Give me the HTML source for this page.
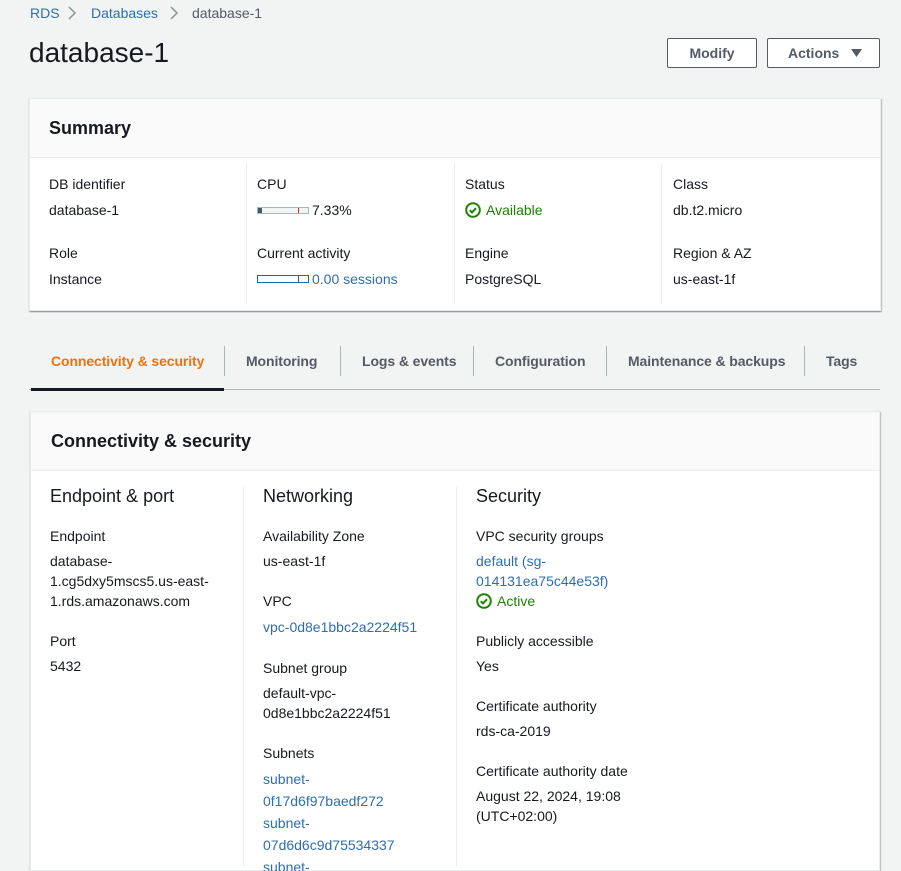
<!DOCTYPE html>
<html><head><meta charset="utf-8"><style>
*{margin:0;padding:0;box-sizing:border-box}
html,body{width:901px;height:871px;overflow:hidden}
body{background:#f2f3f3;font-family:"Liberation Sans",sans-serif;font-size:14px;color:#16191f;position:relative}
.a{position:absolute;white-space:nowrap;line-height:20px}
.l{color:#2e6eb0}
.g{color:#1d8102}
.card{position:absolute;background:#fff;border:1px solid #eaeded;box-shadow:0 1px 1px 0 rgba(0,28,36,.35),1px 1px 1px 0 rgba(0,28,36,.2)}
.hd{position:absolute;left:0;right:0;top:0;background:#fafafa;border-bottom:1px solid #eaeded}
.vd{position:absolute;width:1px;background:#eaeded}
.btn{position:absolute;top:38px;height:30px;border:1px solid #545b64;border-radius:2px;background:#fff;font-weight:bold;color:#545b64;font-size:14px;line-height:28px;text-align:center}
.tab{position:absolute;top:351px;font-weight:bold;color:#545b64;line-height:20px;white-space:nowrap;letter-spacing:-0.1px}
.ts{position:absolute;top:346px;height:30px;width:1px;background:#aab7b8}
</style></head><body>
<div class="a l" style="left:30px;top:3px">RDS</div>
<svg class="a" style="left:67px;top:6px" width="10" height="14"><path d="M2 1l6 6-6 6" fill="none" stroke="#879596" stroke-width="1.5"/></svg>
<div class="a l" style="left:91px;top:3px">Databases</div>
<svg class="a" style="left:169px;top:6px" width="10" height="14"><path d="M2 1l6 6-6 6" fill="none" stroke="#879596" stroke-width="1.5"/></svg>
<div class="a" style="left:192px;top:3px;color:#545b64">database-1</div>
<div class="a" style="left:29px;top:36px;font-size:28px;line-height:34px">database-1</div>
<div class="btn" style="left:667px;width:90px">Modify</div>
<div class="btn" style="left:767px;width:113px;text-align:left;padding-left:20px">Actions<svg style="position:absolute;left:83px;top:10px" width="12" height="9"><path d="M0 0h11l-5.5 8z" fill="#545b64"/></svg></div>

<div class="card" style="left:29px;top:98px;width:852px;height:213px">
 <div class="hd" style="height:59px"><div class="a" style="left:19px;top:19px;font-size:18px;font-weight:bold">Summary</div></div>
 <div class="vd" style="left:216px;top:65px;height:140px"></div>
 <div class="vd" style="left:424px;top:65px;height:140px"></div>
 <div class="vd" style="left:631px;top:65px;height:140px"></div>
</div>
<div class="a" style="left:49px;top:174px">DB identifier</div>
<div class="a" style="left:49px;top:200px">database-1</div>
<div class="a" style="left:49px;top:243px">Role</div>
<div class="a" style="left:49px;top:269px">Instance</div>
<div class="a" style="left:257px;top:174px">CPU</div>
<div class="a" style="left:257px;top:207px;width:52px;height:7px;border:1px solid #aab7b8;background:#f2f3f3"><div style="position:absolute;left:0;top:0;width:4px;height:5px;background:#44546a"></div><div style="position:absolute;left:40px;top:0;width:1px;height:5px;background:#d13212"></div></div>
<div class="a" style="left:312px;top:200px">7.33%</div>
<div class="a" style="left:257px;top:243px">Current activity</div>
<div class="a" style="left:257px;top:275px;width:52px;height:8px;border:1px solid #0073bb;background:#fff"><div style="position:absolute;left:40px;top:0;width:1px;height:6px;background:#d13212"></div></div>
<div class="a l" style="left:312px;top:269px">0.00 sessions</div>
<div class="a" style="left:465px;top:174px">Status</div>
<svg class="a" style="left:465px;top:202px" width="16" height="16"><circle cx="8" cy="8" r="6.8" fill="none" stroke="#1d8102" stroke-width="2"/><path d="M4.8 8.2l2.2 2.2 4-4.2" fill="none" stroke="#1d8102" stroke-width="2"/></svg>
<div class="a g" style="left:486px;top:200px">Available</div>
<div class="a" style="left:465px;top:243px">Engine</div>
<div class="a" style="left:465px;top:269px">PostgreSQL</div>
<div class="a" style="left:673px;top:174px">Class</div>
<div class="a" style="left:673px;top:200px">db.t2.micro</div>
<div class="a" style="left:673px;top:243px">Region &amp; AZ</div>
<div class="a" style="left:673px;top:269px">us-east-1f</div>

<div style="position:absolute;left:29px;top:389px;width:851px;height:1px;background:#aab7b8"></div>
<div style="position:absolute;left:31px;top:388px;width:193px;height:3px;background:#16191f"></div>
<div class="tab" style="left:51px;color:#ec7211">Connectivity &amp; security</div>
<div class="ts" style="left:224px"></div>
<div class="tab" style="left:246px">Monitoring</div>
<div class="ts" style="left:340px"></div>
<div class="tab" style="left:362px">Logs &amp; events</div>
<div class="ts" style="left:473px"></div>
<div class="tab" style="left:495px">Configuration</div>
<div class="ts" style="left:606px"></div>
<div class="tab" style="left:628px">Maintenance &amp; backups</div>
<div class="ts" style="left:804px"></div>
<div class="tab" style="left:826px">Tags</div>

<div class="card" style="left:30px;top:411px;width:850px;height:460px">
 <div class="hd" style="height:59px"><div class="a" style="left:20px;top:19px;font-size:18px;font-weight:bold">Connectivity &amp; security</div></div>
 <div class="vd" style="left:212px;top:75px;height:380px"></div>
 <div class="vd" style="left:425px;top:75px;height:380px"></div>
</div>
<div class="a" style="left:50px;top:485px;font-size:18px;line-height:22px">Endpoint &amp; port</div>
<div class="a" style="left:50px;top:526px">Endpoint</div>
<div class="a" style="left:50px;top:551px">database-</div>
<div class="a" style="left:50px;top:571px">1.cg5dxy5mscs5.us-east-</div>
<div class="a" style="left:50px;top:591px">1.rds.amazonaws.com</div>
<div class="a" style="left:50px;top:631px">Port</div>
<div class="a" style="left:50px;top:656px">5432</div>

<div class="a" style="left:263px;top:485px;font-size:18px;line-height:22px">Networking</div>
<div class="a" style="left:263px;top:526px">Availability Zone</div>
<div class="a" style="left:263px;top:551px">us-east-1f</div>
<div class="a" style="left:263px;top:591px">VPC</div>
<div class="a l" style="left:263px;top:617px">vpc-0d8e1bbc2a2224f51</div>
<div class="a" style="left:263px;top:658px">Subnet group</div>
<div class="a" style="left:263px;top:683px">default-vpc-</div>
<div class="a" style="left:263px;top:703px">0d8e1bbc2a2224f51</div>
<div class="a" style="left:263px;top:743px">Subnets</div>
<div class="a l" style="left:263px;top:769px">subnet-</div>
<div class="a l" style="left:263px;top:791px">0f17d6f97baedf272</div>
<div class="a l" style="left:263px;top:813px">subnet-</div>
<div class="a l" style="left:263px;top:835px">07d6d6c9d75534337</div>
<div class="a l" style="left:263px;top:857px;height:14px;overflow:hidden">subnet-</div>

<div class="a" style="left:476px;top:485px;font-size:18px;line-height:22px">Security</div>
<div class="a" style="left:476px;top:526px">VPC security groups</div>
<div class="a l" style="left:476px;top:551px">default (sg-</div>
<div class="a l" style="left:476px;top:571px">014131ea75c44e53f)</div>
<svg class="a" style="left:476px;top:593px" width="16" height="16"><circle cx="8" cy="8" r="6.8" fill="none" stroke="#1d8102" stroke-width="2"/><path d="M4.8 8.2l2.2 2.2 4-4.2" fill="none" stroke="#1d8102" stroke-width="2"/></svg>
<div class="a g" style="left:497px;top:591px">Active</div>
<div class="a" style="left:476px;top:631px">Publicly accessible</div>
<div class="a" style="left:476px;top:656px">Yes</div>
<div class="a" style="left:476px;top:696px">Certificate authority</div>
<div class="a" style="left:476px;top:721px">rds-ca-2019</div>
<div class="a" style="left:476px;top:761px">Certificate authority date</div>
<div class="a" style="left:476px;top:786px">August 22, 2024, 19:08</div>
<div class="a" style="left:476px;top:806px">(UTC+02:00)</div>
</body></html>
